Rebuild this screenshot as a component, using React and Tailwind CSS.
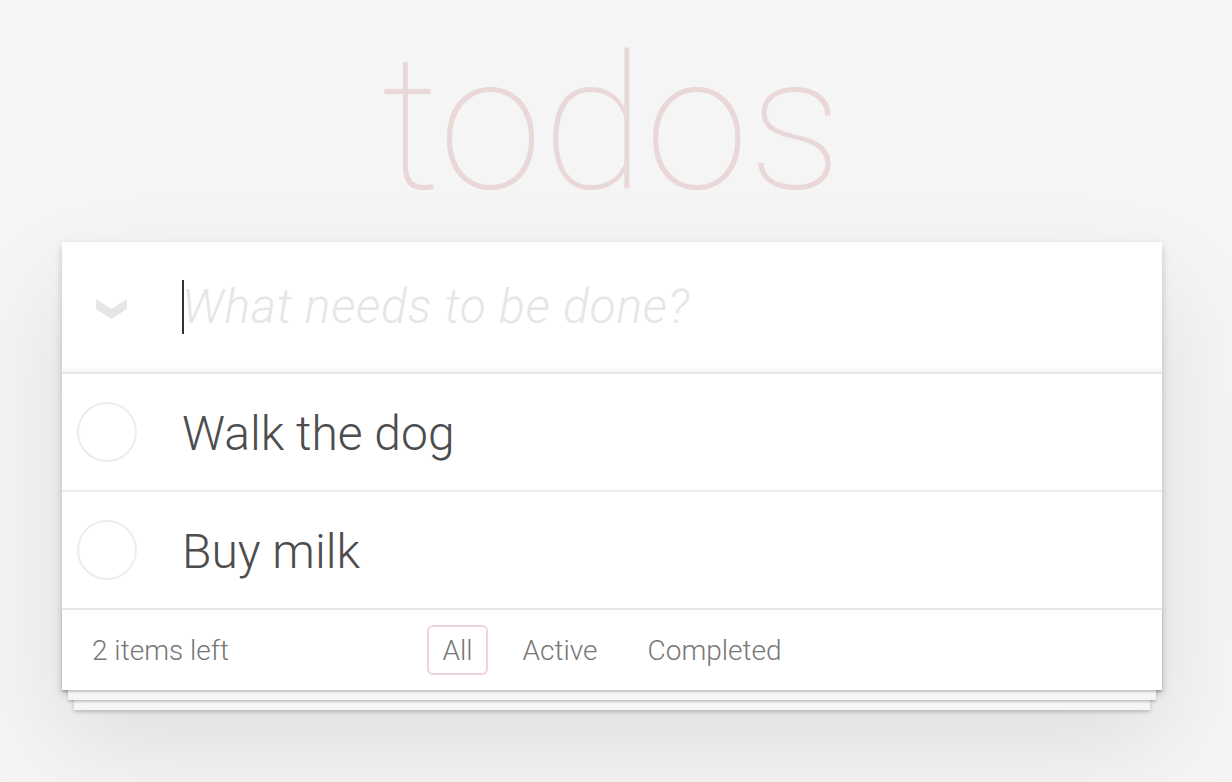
import { useState } from "react";

const todos = [
  { id: 1, title: "Walk the dog", done: false },
  { id: 2, title: "Buy milk", done: false },
];

export default function App() {
  const [filter, setFilter] = useState("All");
  const left = todos.filter((t) => !t.done).length;

  return (
    <div
      className="min-h-screen bg-[#f5f5f5] text-[#4d4d4d] font-light overflow-hidden"
      style={{ fontFamily: "Roboto, 'Liberation Sans', sans-serif" }}
    >
      <h1 className="pt-[30px] pr-[9px] text-center text-[188px] leading-none font-thin text-[rgba(175,47,47,0.15)]">
        todos
      </h1>

      <section className="ml-[62px] mt-[24px] w-[1100px] bg-white shadow-[0_4px_8px_0_rgba(0,0,0,0.2),0_50px_100px_0_rgba(0,0,0,0.1)]">
        {/* new todo */}
        <header className="flex h-[130px] items-center shadow-[inset_0_-4px_2px_rgba(0,0,0,0.03)]">
          <div className="flex w-[120px] items-center">
            <svg
              width="31"
              height="20"
              viewBox="0 0 31 20"
              className="ml-[34px] mt-[4px]"
            >
              <polygon
                points="0,0 15.5,10 31,0 31,10 15.5,20 0,10"
                fill="#e6e6e6"
              />
            </svg>
          </div>
          <div className="flex items-center text-[48px] leading-[1.4]">
            <span className="h-[54px] w-[2px] bg-[#333]" />
            <span className="-ml-[2px] italic font-light tracking-[0.8px] text-[#e6e6e6]">
              What needs to be done?
            </span>
          </div>
        </header>

        {/* list */}
        <ul className="border-t-2 border-[#e6e6e6]">
          {todos.map((t, i) => (
            <li
              key={t.id}
              className={`flex h-[116px] items-center ${
                i < todos.length - 1 ? "h-[118px] border-b-2 border-[#ededed]" : ""
              }`}
            >
              <span className="ml-[15px] h-[60px] w-[60px] rounded-full border-2 border-[#ededed]" />
              <label className="ml-[45px] pt-[3px] text-[48px] leading-[1.2] text-[#4d4d4d]">
                {t.title}
              </label>
            </li>
          ))}
        </ul>

        {/* footer */}
        <footer className="grid h-[82px] grid-cols-[1fr_auto_1fr] items-center border-t-2 border-[#e6e6e6] px-[30px] text-[28px] text-[#777] shadow-[0_2px_2px_rgba(0,0,0,0.2),0_16px_0_-6px_#f6f6f6,0_18px_2px_-6px_rgba(0,0,0,0.2),0_32px_0_-12px_#f6f6f6,0_34px_4px_-12px_rgba(0,0,0,0.2)]">
          <span className="pt-[2px]">
            {left} items left
          </span>
          <ul className="flex gap-[20px]">
            {["All", "Active", "Completed"].map((f) => (
              <li key={f}>
                <button
                  onClick={() => setFilter(f)}
                  className={`flex h-[50px] items-center rounded-[6px] border-2 px-[13px] pt-[2px] ${
                    filter === f
                      ? "border-[rgba(175,47,47,0.2)]"
                      : "border-transparent"
                  }`}
                >
                  {f}
                </button>
              </li>
            ))}
          </ul>
          <span />
        </footer>
      </section>
    </div>
  );
}
